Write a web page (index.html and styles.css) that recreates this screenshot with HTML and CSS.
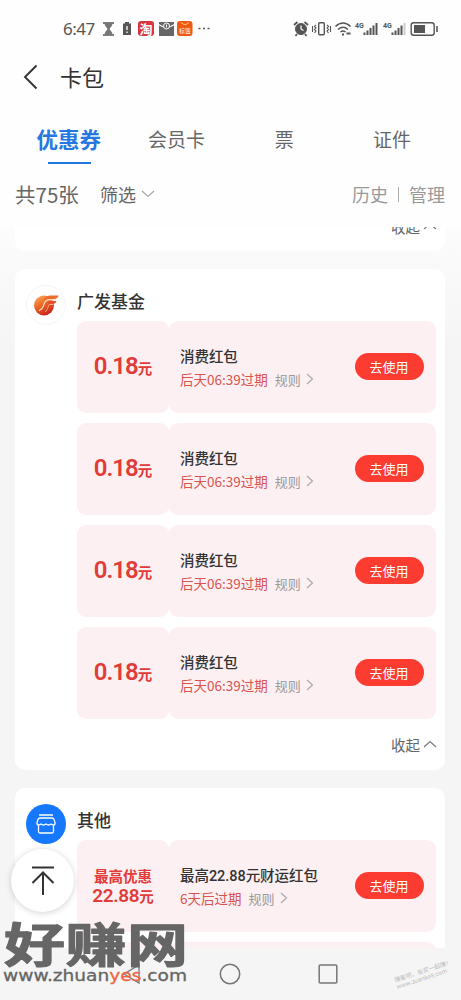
FILE: index.html
```html
<!DOCTYPE html>
<html lang="zh-CN">
<head>
    <meta charset="UTF-8">
    <meta name="viewport" content="width=device-width, initial-scale=1.0">
    <title>卡包</title>
    <link rel="stylesheet" href="styles.css">
</head>
<body>
    <div class="phone">
        <header class="header">
            <!-- Status bar -->
            <div class="status">
                <span class="time">6:47</span>
                <svg class="status-left" width="110" height="18" viewBox="0 0 110 18">
                    <path d="M2 3h11M2 15h11" stroke="#555" stroke-width="1.6"/>
                    <path d="M3.5 3h8c0 3-2 4.500-3 6 1 1.500 3 3 3 6h-8c0-3 2-4.500 3-6-1-1.500-3-3-3-6z" fill="#777"/>
                    <path d="M24 2h4v1.500h2V15h-8V3.500h2z" fill="#555"/>
                    <path d="M26 6v4M26 11.500v1.500" stroke="#fff" stroke-width="1.300"/>
                    <rect x="37" y="1" width="16" height="15" rx="3" fill="#d8343c"/>
                    <text x="38.500" y="13.500" class="mini-tao">淘</text>
                    <path d="M58 2h15v14H58z" fill="#666"/>
                    <path d="M57.500 4.500l4 2 4 1 4-1 4-2" fill="none" stroke="#fff" stroke-width="1.200"/>
                    <circle cx="65.500" cy="6" r="3" fill="#666" stroke="#fff"/>
                    <path d="M65.500 4.500v3" stroke="#fff"/>
                    <rect x="76" y="1" width="15.500" height="15" rx="3" fill="#ee5a12"/>
                    <path d="M80 2.500q4 4 8 0" fill="none" stroke="#ffc07a"/>
                    <text x="78" y="13" class="mini-pin">标签</text>
                    <path d="M97.500 8.500h2M102 8.500h2M106.500 8.500h2" stroke="#555" stroke-width="1.700"/>
                </svg>
                <svg class="status-right" width="146" height="18" viewBox="0 0 146 18">
                    <g fill="none" stroke="#555">
                        <circle cx="8" cy="9" r="5.500" fill="#555"/>
                        <path d="M1 5l3.500-3M15 5l-3.500-3M4 14l-1.500 2M12 14l1.500 2" stroke-width="1.800"/>
                        <path d="M8 5.500V9l2.500 1.500" stroke="#fff" stroke-width="1.200"/>
                        <rect x="25.700" y="2.700" width="5.600" height="12" rx="1" stroke-width="1.400"/>
                        <path d="M23 5l-1.500 1.500L23 8l-1.500 1.500L23 11l-1.500 2M19.500 6v6M34 5l1.500 1.500L34 8l1.500 1.500L34 11l1.500 2M37.500 6v6" stroke-width="1.100"/>
                        <path d="M42.500 6.500q7.500-7 15 0M45 9.500q5-4.500 10 0M47.500 12q2.500-2 5 0" stroke-width="1.600"/>
                        <path d="M49 14.500h2M53.500 13.500h4" stroke-width="2"/>
                        <path d="M71.500 15v-2.500M74.500 15v-4.500M77.500 15V8M80.500 15V5.500M83.500 15V3" stroke-width="2"/>
                        <path d="M99.500 15v-2.500M102.500 15v-4.500M105.500 15V8M108.500 15V5.500" stroke-width="2"/>
                        <path d="M111.500 15V3" stroke="#ccc" stroke-width="2"/>
                        <rect x="118.200" y="2.700" width="23" height="12.600" rx="2.500" stroke-width="1.400"/>
                        <path d="M144 6v6" stroke-width="1.600"/>
                    </g>
                    <rect x="121" y="5" width="11" height="8" fill="#555"/>
                    <text x="62" y="7.500" class="net">4G</text>
                    <text x="90" y="7.500" class="net">4G</text>
                </svg>
            </div>

            <!-- Title -->
            <div class="title-bar">
                <svg width="15" height="26" viewBox="0 0 15 26"><path d="M13.500 1.500L2 13l11.500 11.500" fill="none" stroke="#333" stroke-width="1.900"/></svg>
                <h1>卡包</h1>
            </div>

            <!-- Tabs -->
            <nav class="tabs">
                <a class="tab active">优惠券</a>
                <a class="tab">会员卡</a>
                <a class="tab">票</a>
                <a class="tab">证件</a>
            </nav>

            <!-- Filter row -->
            <div class="filter">
                <span class="total">共75张</span>
                <span class="pick">筛选</span>
                <svg class="down" width="14" height="8" viewBox="0 0 14 8"><path d="M1 1l6 5.500L13 1" fill="none" stroke="#aaa" stroke-width="1.200"/></svg>
                <span class="link">历史</span>
                <i class="bar"></i>
                <span class="link">管理</span>
            </div>
        </header>

        <main class="list">
            <section class="card card-prev">
                <div class="fold">收起<svg width="14" height="8" viewBox="0 0 14 8"><path d="M1 7l6-5.500L13 7" fill="none" stroke="#777" stroke-width="1.200"/></svg></div>
            </section>

            <section class="card">
                <div class="logo fund">
                    <svg width="26" height="22" viewBox="0 0 26 22">
                        <defs>
                            <linearGradient id="flame" x1="0" y1="0" x2="0.500" y2="1">
                                <stop offset="0" stop-color="#f9b45c"/>
                                <stop offset="0.500" stop-color="#ef6a2c"/>
                                <stop offset="1" stop-color="#c9281c"/>
                            </linearGradient>
                        </defs>
                        <circle cx="11" cy="11.500" r="10" fill="url(#flame)"/>
                        <path d="M25.500 1.500c-.5 2-2 3.500-4.500 3.500h-6c-2.500.5-3 2-4 4.500V6c1-3 3-4 6-4.500z" fill="#ee6a30"/>
                        <path d="M23.500 7c-.5 2-2 3-4.500 3h-4V7z" fill="#e2502a"/>
                        <path d="M23 5.700h-7c-4 .3-4.500 3-5.500 6-.8 2.500-2 4-4.500 5" fill="none" stroke="#ffe0b4" stroke-width="1.200"/>
                        <path d="M20.500 10.500h-4c-2 1-1 5-4.500 7.500" fill="none" stroke="#ffc48c" stroke-width=".8"/>
                    </svg>
                </div>
                <div class="content">
                    <h2>广发基金</h2>
                    <div class="coupon">
                        <div class="amount"><p class="price"><b>0.18</b><small>元</small></p></div>
                        <div class="info">
                            <div class="text"><h3>消费红包</h3><p><em>后天06:39过期</em>规则<svg width="8" height="12" viewBox="0 0 8 12"><path d="M1 1l5.500 5L1 11" fill="none" stroke="#aaa" stroke-width="1.200"/></svg></p></div>
                            <button class="use">去使用</button>
                        </div>
                    </div>
                    <div class="coupon">
                        <div class="amount"><p class="price"><b>0.18</b><small>元</small></p></div>
                        <div class="info">
                            <div class="text"><h3>消费红包</h3><p><em>后天06:39过期</em>规则<svg width="8" height="12" viewBox="0 0 8 12"><path d="M1 1l5.500 5L1 11" fill="none" stroke="#aaa" stroke-width="1.200"/></svg></p></div>
                            <button class="use">去使用</button>
                        </div>
                    </div>
                    <div class="coupon">
                        <div class="amount"><p class="price"><b>0.18</b><small>元</small></p></div>
                        <div class="info">
                            <div class="text"><h3>消费红包</h3><p><em>后天06:39过期</em>规则<svg width="8" height="12" viewBox="0 0 8 12"><path d="M1 1l5.500 5L1 11" fill="none" stroke="#aaa" stroke-width="1.200"/></svg></p></div>
                            <button class="use">去使用</button>
                        </div>
                    </div>
                    <div class="coupon">
                        <div class="amount"><p class="price"><b>0.18</b><small>元</small></p></div>
                        <div class="info">
                            <div class="text"><h3>消费红包</h3><p><em>后天06:39过期</em>规则<svg width="8" height="12" viewBox="0 0 8 12"><path d="M1 1l5.500 5L1 11" fill="none" stroke="#aaa" stroke-width="1.200"/></svg></p></div>
                            <button class="use">去使用</button>
                        </div>
                    </div>
                    <div class="fold">收起<svg width="14" height="8" viewBox="0 0 14 8"><path d="M1 7l6-5.500L13 7" fill="none" stroke="#777" stroke-width="1.200"/></svg></div>
                </div>
            </section>

            <section class="card">
                <div class="logo shop">
                    <svg width="20" height="20" viewBox="0 0 20 20" fill="none" stroke="#fff" stroke-width="1.300">
                        <path d="M3 1h14M4 4h12q1.500 0 2 1.500l1 3v1.500q-1.500 2-4 0-2.500 2-5 0-2.500 2-5 0-2.500 2-4 0V8.500l1-3Q2.500 4 4 4zM2.500 11v6.500q0 1.500 1.500 1.500h12q1.500 0 1.500-1.500V11"/>
                    </svg>
                </div>
                <div class="content">
                    <h2>其他</h2>
                    <div class="coupon">
                        <div class="amount"><p class="best">最高优惠</p><p class="price small"><b>22.88</b><small>元</small></p></div>
                        <div class="info">
                            <div class="text"><h3>最高22.88元财运红包</h3><p><em>6天后过期</em>规则<svg width="8" height="12" viewBox="0 0 8 12"><path d="M1 1l5.500 5L1 11" fill="none" stroke="#aaa" stroke-width="1.200"/></svg></p></div>
                            <button class="use">去使用</button>
                        </div>
                    </div>
                    <div class="coupon">
                        <div class="amount"></div>
                        <div class="info"></div>
                    </div>
                </div>
            </section>
        </main>

        <!-- System navigation -->
        <footer class="sysnav">
            <svg width="24" height="24" viewBox="0 0 24 24"><path d="M19 3v18L4 12z" fill="none" stroke="#777" stroke-width="1.300"/></svg>
            <svg width="24" height="24" viewBox="0 0 24 24"><circle cx="12" cy="12" r="9.700" fill="none" stroke="#777" stroke-width="1.500"/></svg>
            <svg width="24" height="24" viewBox="0 0 24 24"><rect x="3.200" y="3" width="17.600" height="18" rx="1" fill="none" stroke="#777" stroke-width="1.500"/></svg>
        </footer>

        <button class="to-top">
            <svg width="24" height="30" viewBox="0 0 24 30"><path d="M1 1.500h22M12 29V7M1.500 17L12 6.500 22.500 17" fill="none" stroke="#333" stroke-width="2"/></svg>
        </button>

        <svg class="mark" width="192" height="72" viewBox="0 0 192 72">
            <g transform="translate(4 43.500) scale(1 .76)"><text class="mark-name" x="0" y="0" textLength="184">好赚网</text></g>
            <text class="mark-url" x="3" y="63" textLength="184" lengthAdjust="spacingAndGlyphs">www.zhuan<tspan class="mark-yes">yes</tspan>.com</text>
        </svg>
        <div class="stamp">赚客吧，有奖一起赚！<br>www.zuanke8.com</div>
    </div>
</body>
</html>
```
FILE: styles.css
```css
* {
    box-sizing: border-box;
    margin: 0;
    padding: 0;
}

body {
    font-family: "Noto Sans CJK SC", sans-serif;
    color: #333;
    background-color: #f5f5f5;
}

.phone {
    position: relative;
    display: flex;
    flex-direction: column;
    width: 461px;
    height: 1000px;
    overflow: hidden;
}

svg {
    flex: none;
}

/* Header */
.header {
    height: 227px;
    flex: none;
    background-color: #fefefe;
}

.status {
    display: flex;
    align-items: center;
    height: 57px;
    padding: 0 22px 0 63px;
}

.time {
    width: 38px;
    font-family: "Noto Sans", sans-serif;
    font-size: 17px;
    letter-spacing: -0.5px;
    color: #555;
}

.status-right {
    margin-left: auto;
}

.mini-tao {
    font-size: 13px;
    font-weight: 700;
    fill: #fff;
}

.mini-pin {
    font-size: 6px;
    fill: #fff;
}

.net {
    font: 700 7px "Roboto", sans-serif;
    fill: #555;
}

.title-bar {
    display: flex;
    align-items: center;
    gap: 22px;
    height: 40px;
    padding-left: 23px;
}

.title-bar h1 {
    font-size: 22px;
    font-weight: 400;
    line-height: 38px;
    height: 40px;
}

/* Tabs */
.tabs {
    display: flex;
    height: 68px;
    padding: 21px 15px 0;
}

.tab {
    position: relative;
    flex: 1;
    height: 46px;
    line-height: 42px;
    text-align: center;
    font-size: 19px;
    color: #666;
}

.tab.active {
    font-size: 21.5px;
    font-weight: 700;
    color: #2478e0;
}

.tab.active::after {
    content: "";
    position: absolute;
    left: 33px;
    bottom: 0;
    width: 43px;
    height: 2.5px;
    background-color: #2478e0;
}

.filter {
    display: flex;
    align-items: center;
    height: 58px;
    padding: 0 16px 0 15px;
    font-size: 18px;
    color: #666;
}

.total {
    width: 85px;
    font-size: 20.5px;
}

.down {
    margin: 0 auto 0 5px;
}

.link {
    color: #999;
}

.bar {
    width: 1px;
    height: 15px;
    margin: 0 10px;
    background-color: #aaa;
}

/* Card list */
.list {
    height: 721px;
    flex: none;
    padding: 0 16px 0 15px;
    overflow: hidden;
    background: linear-gradient(#fcfcfc, #f5f5f5 120px);
}

.card {
    display: flex;
    height: 501px;
    margin-bottom: 18px;
    padding: 16px 9px 0 11px;
    background-color: #fff;
    border-radius: 10px;
}

.card-prev {
    display: block;
    height: 24px;
    padding-top: 0;
    border-radius: 0 0 10px 10px;
    overflow: hidden;
}

.card-prev .fold {
    margin-top: -16px;
}

.logo {
    display: flex;
    align-items: center;
    justify-content: center;
    flex: none;
    width: 40px;
    height: 40px;
    margin-right: 11px;
    border-radius: 50%;
}

.fund {
    border: 1px solid #f5f5f5;
}

.shop {
    background-color: #1677ff;
}

.content {
    flex: 1;
}

.content h2 {
    height: 36px;
    font-size: 17px;
    font-weight: 500;
    line-height: 32px;
}

/* Coupons */
.coupon {
    display: flex;
    height: 92px;
    margin-bottom: 10px;
}

.amount,
.info {
    background-color: #fdf0f2;
    border-radius: 9px;
}

.amount {
    display: flex;
    flex-direction: column;
    align-items: center;
    justify-content: center;
    width: 92px;
    color: #e13c39;
}

.price {
    display: flex;
    align-items: baseline;
    font-weight: 500;
    line-height: 28px;
}

.price b {
    font-family: "Roboto", sans-serif;
    font-size: 24px;
    font-weight: 600;
    letter-spacing: -1px;
}

.price small {
    font-size: 14.5px;
    font-weight: 700;
}

.price.small {
    line-height: 20px;
}

.price.small b {
    font-size: 19px;
    letter-spacing: -0.4px;
}

.best {
    font-size: 14.5px;
    font-weight: 700;
    line-height: 20px;
}

.info {
    display: flex;
    align-items: center;
    justify-content: space-between;
    flex: 1;
    padding: 0 12.5px 0 11px;
}

.text h3 {
    font-family: "Roboto", "Noto Sans CJK SC", sans-serif;
    font-size: 14.5px;
    font-weight: 500;
    line-height: 22px;
    padding-top: 2px;
    letter-spacing: -0.05px;
}

.text p {
    display: flex;
    align-items: center;
    font-size: 13px;
    line-height: 21px;
    color: #999;
}

.text em {
    margin-right: 7px;
    font-size: 13.5px;
    font-style: normal;
    color: #d9534f;
}

.text svg {
    margin-left: 5px;
}

.use {
    width: 69px;
    height: 27px;
    margin-bottom: 1px;
    border: none;
    border-radius: 14px;
    font: 400 13px/25px "Noto Sans CJK SC", sans-serif;
    color: #fff;
    background-color: #fc3b31;
}

.fold {
    display: flex;
    align-items: center;
    justify-content: flex-end;
    gap: 3px;
    height: 30px;
    margin-right: -1px;
    font-size: 14.5px;
    color: #666;
}

/* Bottom navigation */
.sysnav {
    display: flex;
    justify-content: center;
    gap: 74px;
    height: 52px;
    padding: 14px 1px 0 0;
    background-color: #f5f5f5;
}

/* Floating button */
.to-top {
    position: absolute;
    left: 11px;
    top: 849px;
    display: flex;
    align-items: center;
    justify-content: center;
    width: 63px;
    height: 63px;
    border: none;
    border-radius: 50%;
    background-color: #fff;
    box-shadow: 0 1px 6px rgba(0, 0, 0, 0.18);
}

/* Watermarks */
.mark {
    position: absolute;
    left: 0;
    top: 918px;
}

.mark-name {
    font-size: 61px;
    font-weight: 700;
    fill: #666;
    stroke: #666;
    stroke-width: 1.5px;
    stroke-linejoin: round;
}

.mark-url {
    font: 15px "DejaVu Sans", sans-serif;
    fill: #666;
    stroke: #666;
    stroke-width: 0.3px;
}

.mark-yes {
    fill: #f0653f;
    stroke: #f0653f;
}

.stamp {
    position: absolute;
    left: 394px;
    top: 967px;
    font-size: 6px;
    line-height: 7px;
    white-space: nowrap;
    color: #bbb;
    transform: rotate(-18deg);
}
```
